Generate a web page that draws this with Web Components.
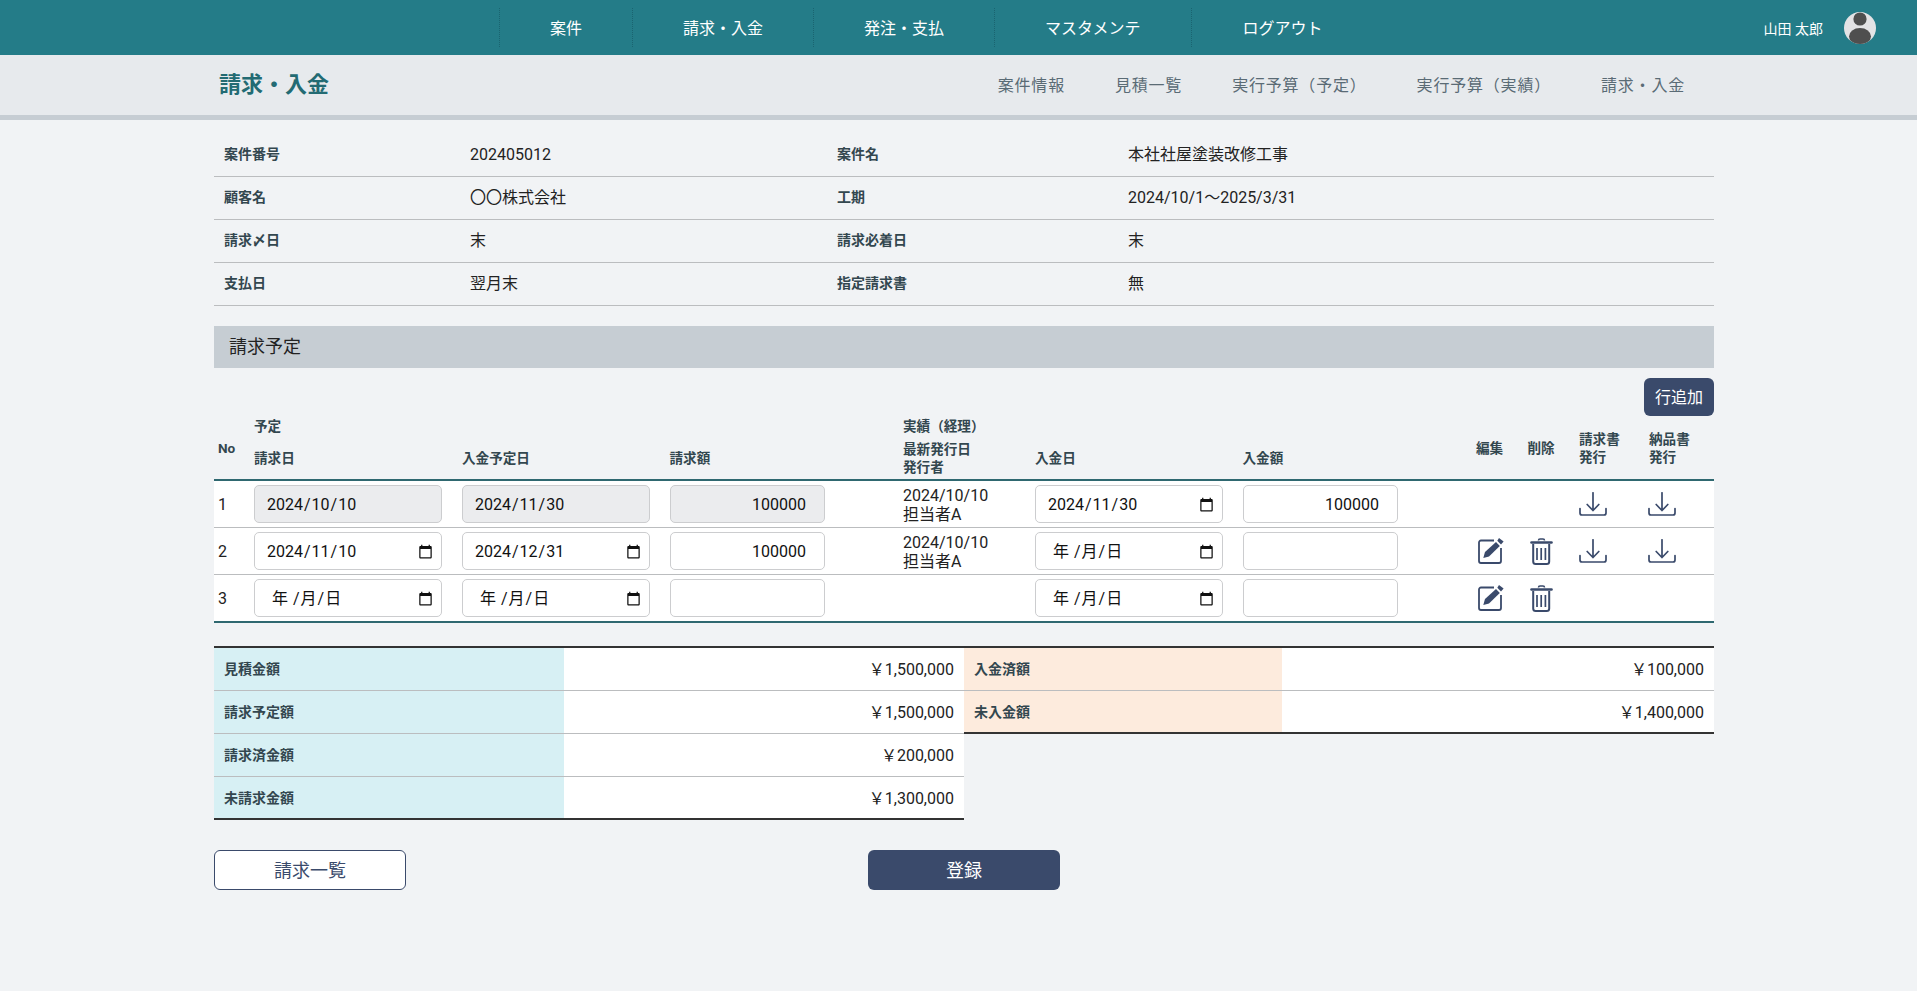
<!DOCTYPE html>
<html lang="ja">
<head>
<meta charset="utf-8">
<title>請求・入金</title>
<style>
    html, body {
        margin: 0;
        background-color: #F1F3F5;
        color: #222;
        font-family: Roboto, "Noto Sans CJK JP", sans-serif;
        font-size: 16px;
    }
</style>
</head>
<body>
<app-header></app-header>
<sub-header heading="請求・入金"></sub-header>
<billing-page></billing-page>

<script>
const NAVY = '#3A4A6B';

function makeTemplate(html) {
    const template = document.createElement('template');
    template.innerHTML = html;
    return template;
}

class BaseElement extends HTMLElement {
    connectedCallback() {
        if (this.shadowRoot) return;
        const root = this.attachShadow({ mode: 'open' });
        root.appendChild(makeTemplate(this.render()).content.cloneNode(true));
    }
}

class AppHeader extends BaseElement {
    render() {
        const links = ['案件', '請求・入金', '発注・支払', 'マスタメンテ', 'ログアウト'];
        return `
<style>
    :host {
        align-items: center;
        background-color: #247C88;
        color: #fff;
        display: flex;
        height: 55px;
        padding: 0 41px 0 499px;
    }
    nav { display: flex; }
    a {
        align-items: center;
        border-left: 1px dotted #1A6470;
        box-sizing: border-box;
        display: flex;
        height: 39px;
        padding: 0 50px 2px;
    }
    a:last-child { padding-left: 51px; }
    .user {
        align-items: center;
        display: flex;
        font-size: 14px;
        gap: 21px;
        margin-left: auto;
    }
    svg { display: block; }
</style>
<nav>${links.map(l => `<a>${l}</a>`).join('')}</nav>
<div class="user">
    <span>山田 太郎</span>
    <svg width="32" height="32" viewBox="0 0 32 32">
        <clipPath id="round"><circle cx="16" cy="16" r="16"/></clipPath>
        <g clip-path="url(#round)">
            <rect width="32" height="32" fill="#E3E3E5"/>
            <circle cx="16" cy="7" r="6.6" fill="#4F4F4F"/>
            <ellipse cx="16" cy="24.5" rx="11" ry="8.5" fill="#4F4F4F"/>
        </g>
    </svg>
</div>`;
    }
}

class SubHeader extends BaseElement {
    render() {
        const links = ['案件情報', '見積一覧', '実行予算（予定）', '実行予算（実績）', '請求・入金'];
        return `
<style>
    :host {
        align-items: center;
        background-color: #E7EAED;
        border-bottom: 5px solid #C6CDD3;
        display: flex;
        height: 60px;
        padding: 0 232px 0 219px;
    }
    h1 {
        color: #236B73;
        font-size: 22px;
        font-weight: bold;
        margin: -6px 0 0;
    }
    nav {
        color: #5A6B75;
        display: flex;
        gap: 50px;
        letter-spacing: 0.05em;
        margin-left: auto;
        padding-bottom: 2px;
    }
</style>
<h1>${this.getAttribute('heading')}</h1>
<nav>${links.map(l => `<span>${l}</span>`).join('')}</nav>`;
    }
}

class InfoTable extends BaseElement {
    render() {
        const rows = [
            ['案件番号', '202405012', '案件名', '本社社屋塗装改修工事'],
            ['顧客名', '〇〇株式会社', '工期', '2024/10/1～2025/3/31'],
            ['請求〆日', '末', '請求必着日', '末'],
            ['支払日', '翌月末', '指定請求書', '無'],
        ];
        return `
<style>
    :host { display: block; }
    .row {
        border-bottom: 1px solid #BBBDBF;
        display: grid;
        grid-template-columns: 246px 367px 291px 596px;
        height: 42px;
        line-height: 42px;
    }
    b {
        color: #33474F;
        font-size: 14px;
        line-height: 40px;
        padding-left: 10px;
    }
    span { padding-left: 10px; }
</style>
${rows.map(r => `
<div class="row">
    <b>${r[0]}</b><span>${r[1]}</span><b>${r[2]}</b><span>${r[3]}</span>
</div>`).join('')}`;
    }
}

class SectionTitle extends BaseElement {
    render() {
        return `
<style>
    :host {
        background-color: #C6CDD3;
        color: #222;
        display: block;
        font-size: 18px;
        height: 42px;
        line-height: 42px;
        padding-left: 15px;
    }
</style>
<slot></slot>`;
    }
}

class ActionButton extends BaseElement {
    render() {
        return `
<style>
    :host {
        align-items: center;
        background-color: ${NAVY};
        border-radius: 6px;
        box-sizing: border-box;
        color: #fff;
        display: flex;
        font-size: 18px;
        height: 40px;
        justify-content: center;
        padding-bottom: 2px;
        width: 192px;
    }
    :host([outline]) {
        background-color: #fff;
        border: 1px solid ${NAVY};
        color: ${NAVY};
    }
    :host([small]) {
        font-size: 16px;
        height: 38px;
        width: 70px;
    }
</style>
<slot></slot>`;
    }
}

class DateField extends BaseElement {
    render() {
        const value = this.getAttribute('value');
        const text = value
            ? value.split('/').map(p => `<i>${p}</i>`).join('/')
            : '<span class="empty"><i>年</i> /<i>月</i>/<i>日</i></span>';
        return `
<style>
    :host {
        align-items: center;
        background-color: #fff;
        border: 1px solid #CCCDCF;
        border-radius: 5px;
        box-sizing: border-box;
        color: #111;
        display: flex;
        height: 38px;
        justify-content: space-between;
        padding: 0 8px 0 11px;
    }
    :host([disabled]) { background-color: #EBECEE; }
    i { font-style: normal; padding: 0 1px; }
    .empty { display: block; padding: 0 0 2px 5px; }
    svg { display: block; }
</style>
<span>${text}</span>
${this.hasAttribute('disabled') ? '' : `
<svg width="15" height="15" viewBox="0 0 24 24" fill="#111">
    <path d="M20 3h-1V1h-2v2H7V1H5v2H4c-1.100 0-2 .9-2 2v16c0 1.100.9 2 2 2h16c1.100 0 2-.9 2-2V5c0-1.100-.9-2-2-2zm0 18H4V8h16v13z"/>
</svg>`}`;
    }
}

class AmountField extends BaseElement {
    render() {
        return `
<style>
    :host {
        background-color: #fff;
        border: 1px solid #CCCDCF;
        border-radius: 5px;
        box-sizing: border-box;
        color: #111;
        display: block;
        height: 38px;
        line-height: 38px;
        padding-right: 18px;
        text-align: right;
    }
    :host([disabled]) { background-color: #EBECEE; }
</style>
<slot></slot>`;
    }
}

const ICONS = {
    edit: `<svg width="26" height="26" viewBox="0 0 26 26" fill="none" stroke="${NAVY}" stroke-width="1.800">
        <path d="M16 2.500H3a2 2 0 0 0-2 2V23a2 2 0 0 0 2 2h18a2 2 0 0 0 2-2V10"/>
        <path d="M5.300 20l1.700-6L18 4l3.800 4L11 18.400z" fill="${NAVY}" stroke="none"/>
        <path d="M19.300 2.800l1.700-2.800 4.600 3.500-2.600 3z" fill="${NAVY}" stroke="none"/>
    </svg>`,
    trash: `<svg width="23" height="27" viewBox="0 0 23 27" fill="none" stroke="${NAVY}" stroke-width="2">
        <path d="M1.500 4.500h20" stroke-width="2.600" stroke-linecap="round"/>
        <path d="M8.500 2.500c0-1 .5-1.500 1.500-1.500h3c1 0 1.500 .5 1.500 1.500" stroke-width="1.600"/>
        <path d="M3.200 6v17.500c0 1.500 1 2.500 2.500 2.500h11c1.500 0 2.500-1 2.500-2.500V6"/>
        <path d="M7 10v12M11.200 10v12M15.400 10v12" stroke-width="1.700"/>
    </svg>`,
    download: `<svg width="28" height="24" viewBox="0 0 28 24" fill="none" stroke="${NAVY}" stroke-width="1.700" stroke-linecap="round" stroke-linejoin="round">
        <path d="M14 .8V18.500M8.200 12.500l5.800 6 5.800-6"/>
        <path d="M1 16.500v4.500a2 2 0 0 0 2 2h22a2 2 0 0 0 2-2v-4.500"/>
    </svg>`,
};

class AppIcon extends BaseElement {
    render() {
        return `
<style>
    :host { display: block; line-height: 0; }
</style>
${ICONS[this.getAttribute('name')]}`;
    }
}

class BillingTable extends BaseElement {
    render() {
        const rows = [
            {
                no: 1,
                dis: true,
                date: '2024/10/10',
                due: '2024/11/30',
                amount: '100000',
                issued: '2024/10/10',
                by: '担当者A',
                paid: '2024/11/30',
                paidAmount: '100000',
                tools: false,
                docs: true,
            },
            {
                no: 2,
                date: '2024/11/10',
                due: '2024/12/31',
                amount: '100000',
                issued: '2024/10/10',
                by: '担当者A',
                tools: true,
                docs: true,
            },
            { no: 3, tools: true, docs: false },
        ];
        const cols = '40px 208px 207.500px 233.500px 132px 207.500px 233.500px 51.500px 51.500px 70px 65px';
        return `
<style>
    :host { display: block; }
    .head, .row {
        display: grid;
        grid-template-columns: ${cols};
    }
    .head {
        border-bottom: 2px solid #2F6870;
        color: #33474F;
        font-size: 13.600px;
        font-weight: bold;
        grid-template-rows: 20px 43px;
        line-height: 18px;
    }
    .head div { align-self: center; }
    .top { grid-row: 1; }
    .sub { grid-row: 2; }
    .span { grid-row: 1 / 3; }
    .row {
        align-items: center;
        background-color: #fff;
        border-bottom: 1px solid #BBBDBF;
        height: 46px;
    }
    .row:last-child { border-bottom: 2px solid #2F6870; }
    .no { padding-left: 4px; }
    .who { line-height: 19px; padding-top: 1px; }
    date-field { width: 188px; }
    amount-field { width: 155.500px; }
    .no-head { padding-left: 4px; }
    .edit { margin-left: 1.500px; }
    .trash { margin-left: 2.500px; }
    .last { margin-left: -1px; }
</style>
<div class="head">
    <div class="span no-head" style="grid-column:1">No</div>
    <div class="top" style="grid-column:2">予定</div>
    <div class="sub" style="grid-column:2">請求日</div>
    <div class="sub" style="grid-column:3">入金予定日</div>
    <div class="sub" style="grid-column:4">請求額</div>
    <div class="top" style="grid-column:5">実績（経理）</div>
    <div class="sub" style="grid-column:5">最新発行日<br>発行者</div>
    <div class="sub" style="grid-column:6">入金日</div>
    <div class="sub" style="grid-column:7">入金額</div>
    <div class="span" style="grid-column:8">編集</div>
    <div class="span" style="grid-column:9">削除</div>
    <div class="span" style="grid-column:10">請求書<br>発行</div>
    <div class="span" style="grid-column:11">納品書<br>発行</div>
</div>
${rows.map(r => `
<div class="row">
    <div class="no">${r.no}</div>
    <date-field ${r.date ? `value="${r.date}"` : ''} ${r.dis ? 'disabled' : ''}></date-field>
    <date-field ${r.due ? `value="${r.due}"` : ''} ${r.dis ? 'disabled' : ''}></date-field>
    <amount-field ${r.dis ? 'disabled' : ''}>${r.amount || ''}</amount-field>
    <div class="who">${r.issued ? `${r.issued}<br>${r.by}` : ''}</div>
    <date-field ${r.paid ? `value="${r.paid}"` : ''}></date-field>
    <amount-field>${r.paidAmount || ''}</amount-field>
    <div class="edit">${r.tools ? '<app-icon name="edit"></app-icon>' : ''}</div>
    <div class="trash">${r.tools ? '<app-icon name="trash"></app-icon>' : ''}</div>
    <div>${r.docs ? '<app-icon name="download"></app-icon>' : ''}</div>
    <div class="last">${r.docs ? '<app-icon name="download"></app-icon>' : ''}</div>
</div>`).join('')}`;
    }
}

class SummaryTable extends BaseElement {
    render() {
        const rows = JSON.parse(this.getAttribute('rows'));
        return `
<style>
    :host {
        align-self: start;
        border-bottom: 2px solid #333;
        border-top: 2px solid #333;
        display: block;
    }
    .row {
        background-color: #fff;
        border-bottom: 1px solid #BBBDBF;
        display: grid;
        grid-template-columns: ${this.getAttribute('label-width')} 1fr;
        grid-template-rows: minmax(0, 1fr);
        height: 42px;
        line-height: 42px;
    }
    .row:last-child { border-bottom: none; height: 41px; }
    b {
        background-color: ${this.getAttribute('tone')};
        color: #33474F;
        font-size: 14px;
        padding-left: 10px;
    }
    span { line-height: 43px; padding-right: 10px; text-align: right; }
</style>
${rows.map(r => `<div class="row"><b>${r[0]}</b><span>${r[1]}</span></div>`).join('')}`;
    }
}

class BillingPage extends BaseElement {
    render() {
        const left = [
            ['見積金額', '￥1,500,000'],
            ['請求予定額', '￥1,500,000'],
            ['請求済金額', '￥200,000'],
            ['未請求金額', '￥1,300,000'],
        ];
        const right = [
            ['入金済額', '￥100,000'],
            ['未入金額', '￥1,400,000'],
        ];
        return `
<style>
    :host {
        display: block;
        padding: 14px 0 0 214px;
        width: 1500px;
    }
    section-title { margin-top: 20px; }
    .tools {
        display: flex;
        justify-content: flex-end;
        margin-top: 10px;
    }
    billing-table { margin-bottom: 23px; }
    .totals {
        display: grid;
        grid-template-columns: 750px 750px;
    }
    .buttons {
        align-items: center;
        display: grid;
        grid-template-columns: 654px 192px 654px;
        margin-top: 30px;
    }
</style>
<info-table></info-table>
<section-title>請求予定</section-title>
<div class="tools"><action-button small>行追加</action-button></div>
<billing-table></billing-table>
<div class="totals">
    <summary-table label-width="350px" tone="#D7F0F4" rows='${JSON.stringify(left)}'></summary-table>
    <summary-table label-width="318px" tone="#FDEBDD" rows='${JSON.stringify(right)}'></summary-table>
</div>
<div class="buttons">
    <action-button outline>請求一覧</action-button>
    <action-button>登録</action-button>
</div>`;
    }
}

customElements.define('app-header', AppHeader);
customElements.define('sub-header', SubHeader);
customElements.define('info-table', InfoTable);
customElements.define('section-title', SectionTitle);
customElements.define('action-button', ActionButton);
customElements.define('date-field', DateField);
customElements.define('amount-field', AmountField);
customElements.define('app-icon', AppIcon);
customElements.define('billing-table', BillingTable);
customElements.define('summary-table', SummaryTable);
customElements.define('billing-page', BillingPage);
</script>
</body>
</html>
